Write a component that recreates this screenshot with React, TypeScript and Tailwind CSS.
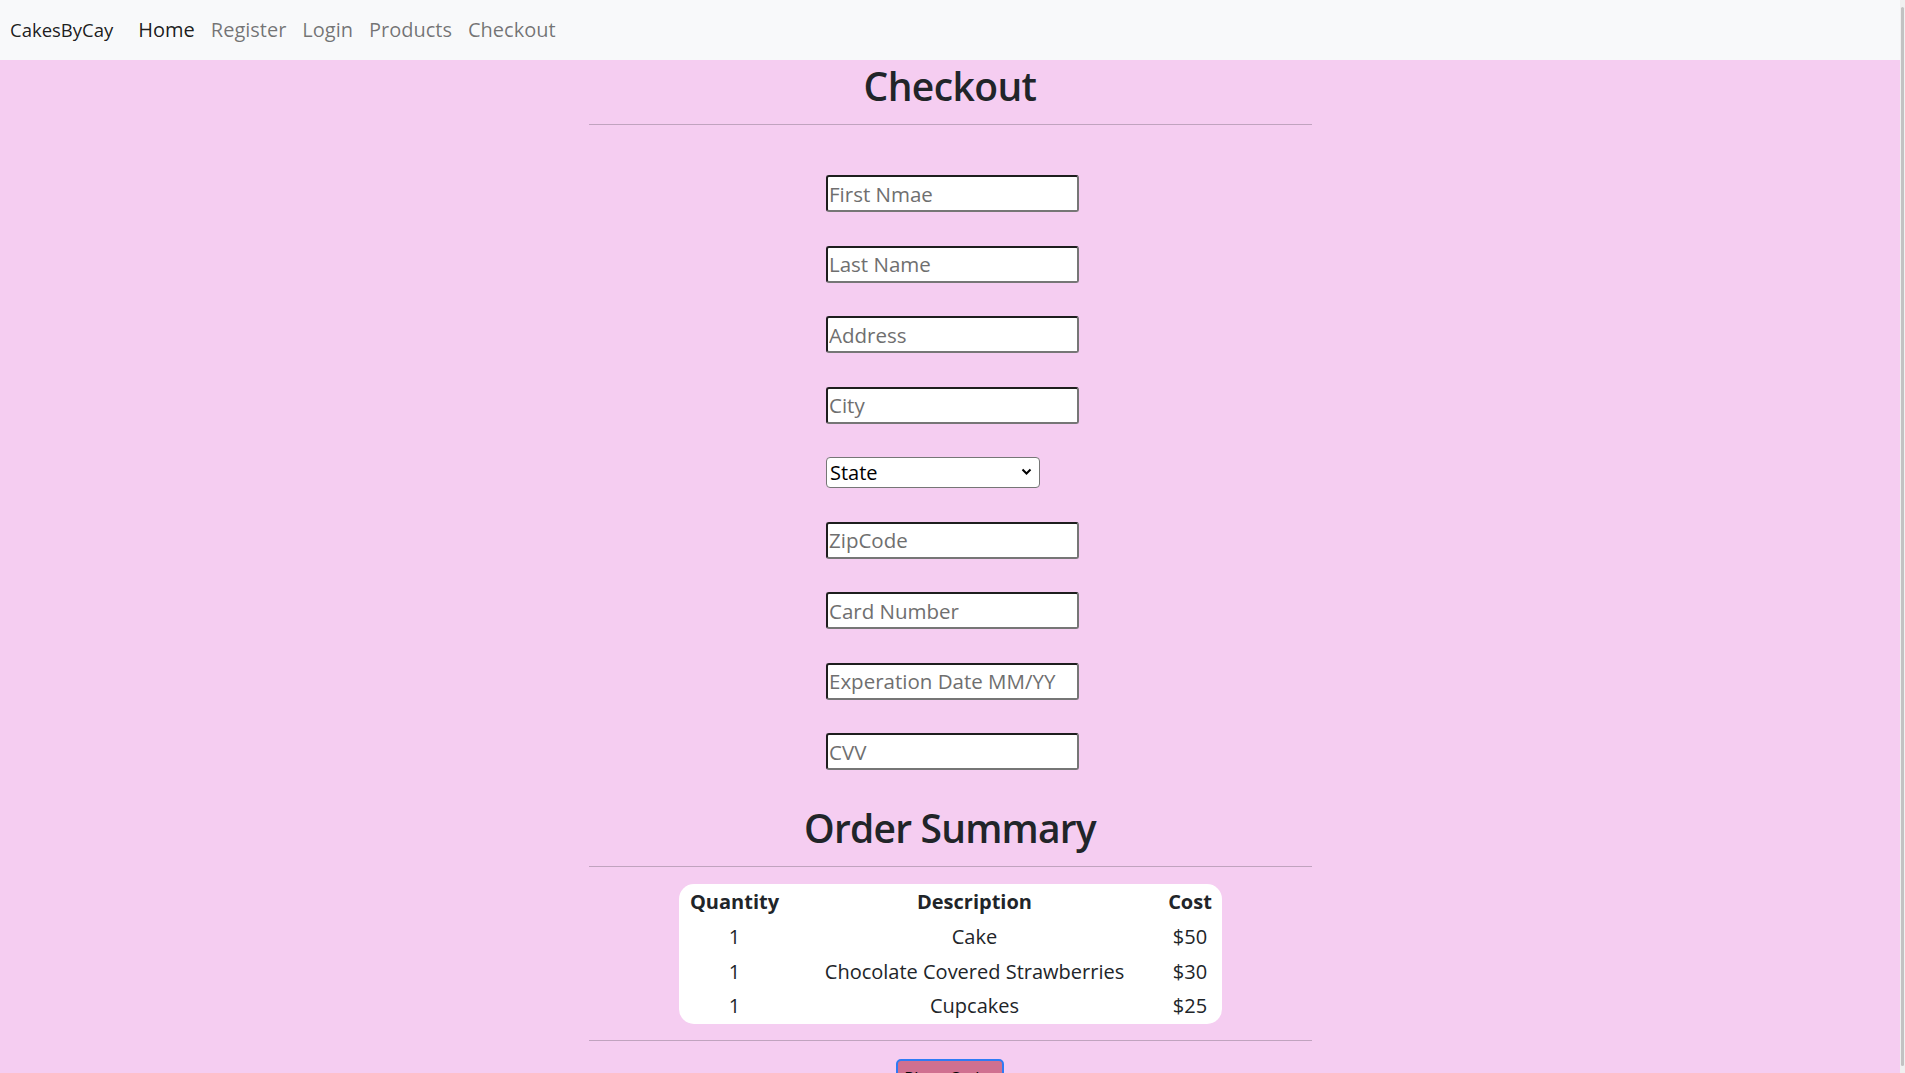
const fields = [
  "First Nmae",
  "Last Name",
  "Address",
  "City",
];

const cardFields = ["ZipCode", "Card Number", "Experation Date MM/YY", "CVV"];

const items = [
  { qty: 1, desc: "Cake", cost: "$50" },
  { qty: 1, desc: "Chocolate Covered Strawberries", cost: "$30" },
  { qty: 1, desc: "Cupcakes", cost: "$25" },
];

const TextBox = ({ placeholder }: { placeholder: string }) => (
  <input
    type="text"
    placeholder={placeholder}
    className="block h-[37px] w-[253px] rounded-[3px] border-2 border-t-[#1e1e1e] border-l-[#1e1e1e] border-r-[#767676] border-b-[#767676] bg-white px-[1px] text-[20.5px] text-black placeholder:text-[#6f6f6f] outline-none"
  />
);

const App = () => {
  return (
    <div
      className="flex h-screen overflow-hidden bg-[#f5cdf1] text-[#212529]"
      style={{ fontFamily: '"Segoe UI", "Open Sans", "Noto Sans", sans-serif' }}
    >
      <div className="flex-1">
        {/* Navbar */}
        <nav className="flex h-[60px] items-center bg-[#f8f9fa] pl-[10px]">
          <span className="mr-[25px] text-[18.5px] text-black/90">CakesByCay</span>
          <div className="flex gap-[16px] text-[20px]">
            <a className="text-black/90">Home</a>
            <a className="text-black/55">Register</a>
            <a className="text-black/55">Login</a>
            <a className="text-black/55">Products</a>
            <a className="text-black/55">Checkout</a>
          </div>
        </nav>

        <div className="mx-auto w-[723px]">
          <h2 className="m-0 pt-[3px] text-center text-[39px] font-semibold leading-[46px] tracking-[-0.6px]">Checkout</h2>
          <hr className="mt-[15px] border-t border-[#c0a3bf]" />

          {/* Form */}
          <div className="mx-auto mt-[50px] flex w-[258px] flex-col gap-[33.5px] pl-[5px]">
            {fields.map((f) => (
              <TextBox key={f} placeholder={f} />
            ))}
            <div className="relative w-[214px]">
              <select className="block h-[31px] w-[214px] appearance-none rounded-[4px] border border-[#767676] bg-white pl-[3px] text-[20px] leading-[27px] text-black outline-none">
                <option>State</option>
              </select>
              <svg
                className="pointer-events-none absolute right-[8px] top-[11px]"
                width="11"
                height="8"
                viewBox="0 0 11 8"
              >
                <path d="M1.5 1.5 L5.5 5.5 L9.5 1.5" fill="none" stroke="#000" strokeWidth="2" />
              </svg>
            </div>
            {cardFields.map((f) => (
              <TextBox key={f} placeholder={f} />
            ))}
          </div>

          <h2 className="mt-[32px] pt-[3px] text-center text-[39px] font-semibold leading-[46px] tracking-[-0.8px]">Order Summary</h2>
          <hr className="mt-[15px] border-t border-[#c0a3bf]" />

          {/* Order table */}
          <div className="mx-auto mt-[17px] w-[543px] rounded-[15px] bg-white px-[6px]">
            <table className="w-full border-collapse text-[20px]">
              <thead>
                <tr className="h-[36px]">
                  <th className="w-[100px] text-center font-bold">Quantity</th>
                  <th className="text-center font-bold">Description</th>
                  <th className="w-[51px] text-center font-bold">Cost</th>
                </tr>
              </thead>
              <tbody>
                {items.map((item) => (
                  <tr key={item.desc} className="h-[34.5px]">
                    <td className="text-center">{item.qty}</td>
                    <td className="text-center">{item.desc}</td>
                    <td className="text-center">{item.cost}</td>
                  </tr>
                ))}
              </tbody>
            </table>
          </div>

          <hr className="mt-[16px] border-t border-[#c0a3bf]" />

          <div className="mt-[18px] flex justify-center">
            <button className="w-[108px] rounded-[5px] border-2 border-[#2f7bf5] bg-[#d07090] pb-[10px] pt-[7px] text-[16.7px] leading-[20px] text-black">
              Place Order
            </button>
          </div>
        </div>
      </div>

      {/* scrollbar strip */}
      <div className="flex w-[5px] flex-col bg-[#f0f0f0] py-[7px]">
        <div className="mx-auto w-[3px] flex-1 rounded-full bg-[#c2c2c2]" />
      </div>
    </div>
  );
};

export default App;
